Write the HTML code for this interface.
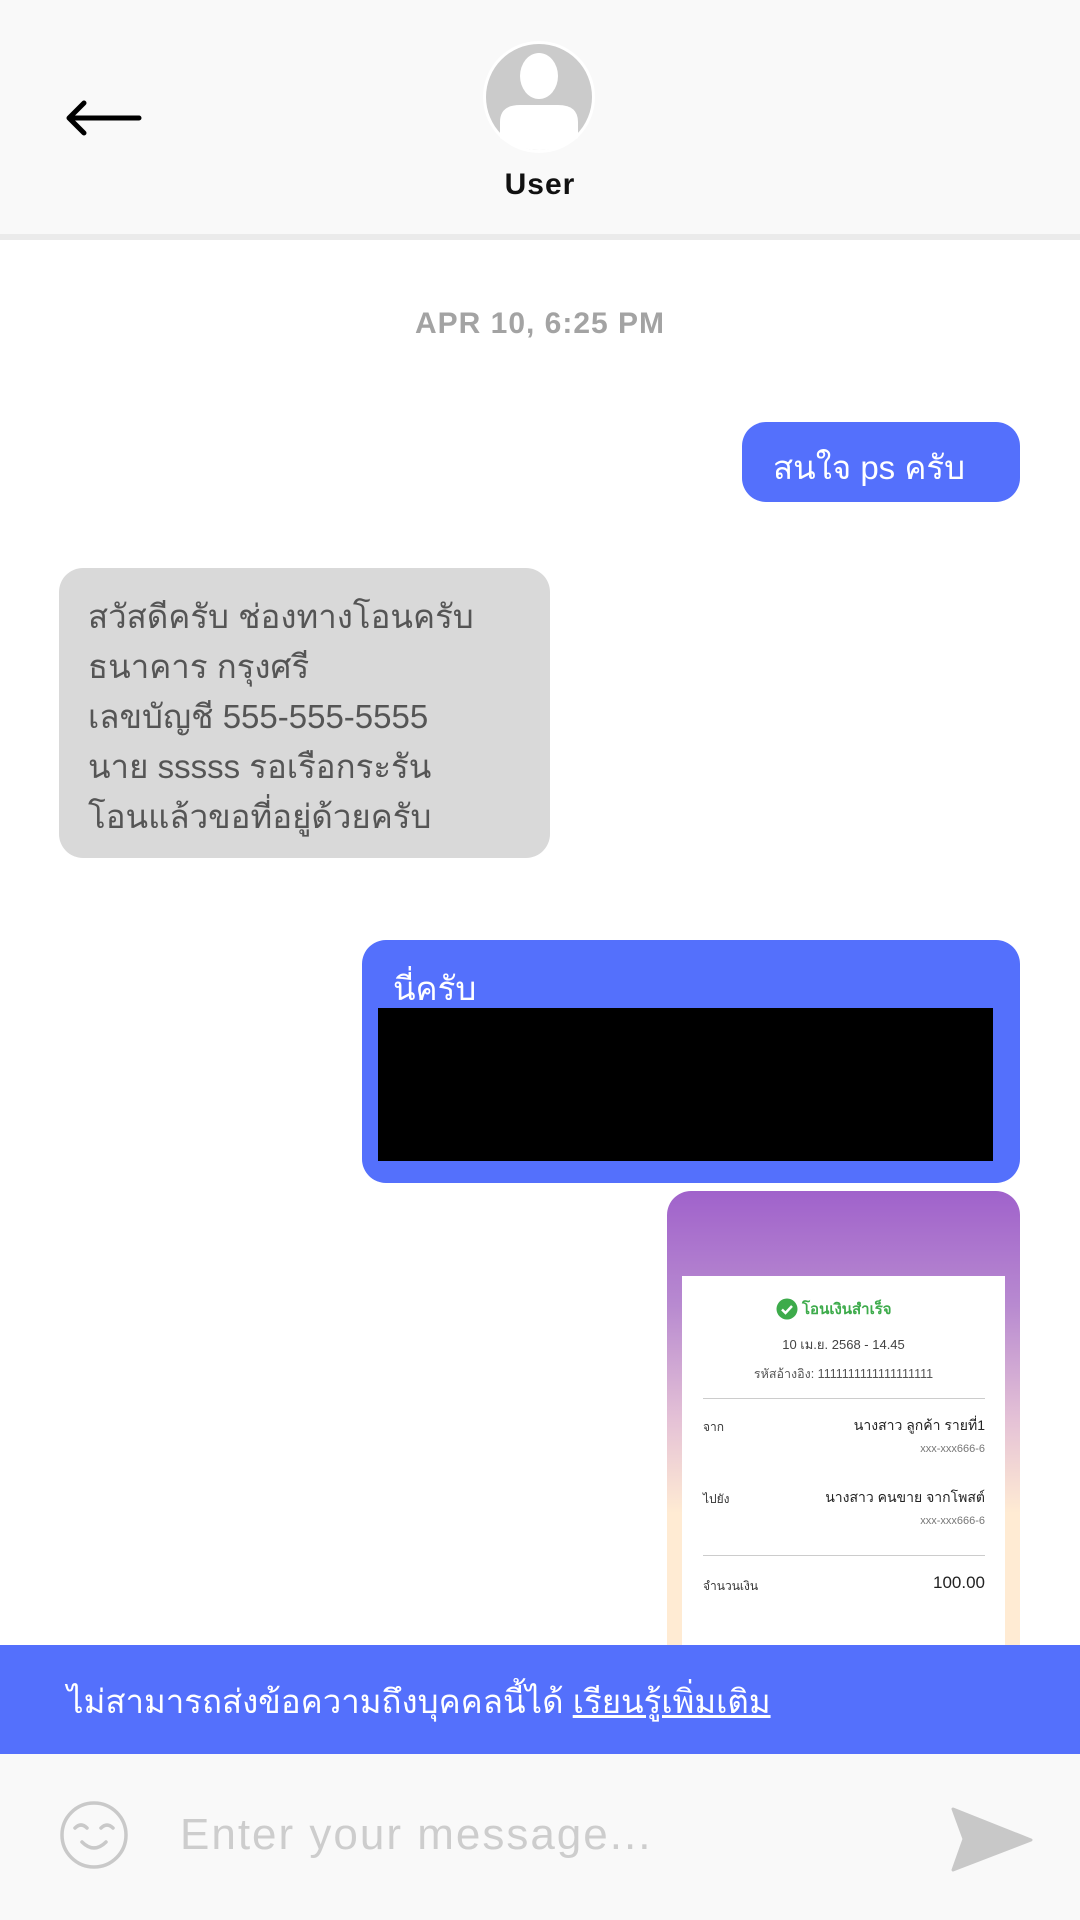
<!DOCTYPE html>
<html><head><meta charset="utf-8"><style>
*{margin:0;padding:0;box-sizing:border-box}
body{width:1080px;height:1920px;position:relative;background:#fff;font-family:"Liberation Sans","Noto Sans CJK SC",sans-serif;overflow:hidden}
.a{position:absolute}
.th{font-family:"Liberation Sans","Noto Sans CJK SC",sans-serif}
</style></head><body>
<div class="a" style="left:0;top:0;width:1080px;height:240px;background:#f9f9f9;border-bottom:6px solid #ebebeb"></div>
<svg class="a" style="left:0;top:0" width="200" height="200"><path d="M139 118H70M84 103L69 118L84 133" stroke="#000" stroke-width="5" fill="none" stroke-linecap="round" stroke-linejoin="round"/></svg>
<svg class="a" style="top:38px;left:480px" width="118" height="118"><circle cx="59" cy="59" r="56" fill="#fff"/><circle cx="59" cy="59" r="53" fill="#cbcbcb"/><ellipse cx="59" cy="38" rx="19" ry="23" fill="#fff"/><path d="M20 100V84Q20 67 40 67H78Q98 67 98 84V100Q80 112 59 112Q38 112 20 100Z" fill="#fff"/></svg>
<div class="a" style="left:0;width:1080px;top:168px;text-align:center;font-size:30px;font-weight:bold;color:#111;letter-spacing:1px">User</div>
<div class="a" style="left:0;width:1080px;top:307px;text-align:center;font-size:30px;font-weight:bold;color:#a3a3a3;letter-spacing:1px">APR 10, 6:25 PM</div>

<div class="a th" style="left:742px;top:422px;width:278px;height:80px;background:#5470fc;border-radius:24px;color:#fff;font-size:33px;padding:19px 0 0 31px">สนใจ ps ครับ</div>

<div class="a th" style="left:59px;top:568px;width:491px;height:290px;background:#d9d9d9;border-radius:24px;color:#555;font-size:33px;line-height:50px;padding:24px 0 0 29px">สวัสดีครับ ช่องทางโอนครับ<br>ธนาคาร กรุงศรี<br>เลขบัญชี 555-555-5555<br>นาย sssss รอเรือกระรัน<br>โอนแล้วขอที่อยู่ด้วยครับ</div>

<div class="a" style="left:362px;top:940px;width:658px;height:243px;background:#5470fc;border-radius:24px"></div>
<div class="a th" style="left:393px;top:962px;color:#fff;font-size:33px">นี่ครับ</div>
<div class="a" style="left:378px;top:1008px;width:615px;height:153px;background:#000"></div>

<div class="a" style="left:667px;top:1191px;width:353px;height:460px;border-radius:24px 24px 0 0;background:linear-gradient(#a062cb 0%,#b88ad0 25%,#e5c2d6 50%,#ffebd3 70%,#ffebd3 100%)"></div>
<div class="a th" style="left:682px;top:1276px;width:323px;height:380px;background:#fff;color:#333">
 <svg class="a" style="left:94px;top:22px" width="22" height="22"><circle cx="11" cy="11" r="10.5" fill="#3dab4b"/><path d="M6 11.5l3.5 3.5 6.5-7" stroke="#fff" stroke-width="2.5" fill="none"/></svg>
 <div class="a" style="left:120px;top:21px;font-size:15px;color:#3dab4b;font-weight:bold">โอนเงินสำเร็จ</div>
 <div class="a" style="left:0;width:323px;top:58px;text-align:center;font-size:13px;color:#444">10 เม.ย. 2568 - 14.45</div>
 <div class="a" style="left:0;width:323px;top:88px;text-align:center;font-size:12.5px;color:#555">รหัสอ้างอิง: 1111111111111111111</div>
 <div class="a" style="left:21px;top:122px;width:282px;height:1px;background:#ccc"></div>
 <div class="a" style="left:21px;top:142px;font-size:12px">จาก</div>
 <div class="a" style="right:20px;top:139px;font-size:14px;color:#222">นางสาว ลูกค้า รายที่1</div>
 <div class="a" style="right:20px;top:167px;font-size:11px;color:#777">xxx-xxx666-6</div>
 <div class="a" style="left:21px;top:214px;font-size:12px">ไปยัง</div>
 <div class="a" style="right:20px;top:211px;font-size:14px;color:#222">นางสาว คนขาย จากโพสต์</div>
 <div class="a" style="right:20px;top:239px;font-size:11px;color:#777">xxx-xxx666-6</div>
 <div class="a" style="left:21px;top:279px;width:282px;height:1px;background:#ccc"></div>
 <div class="a" style="left:21px;top:301px;font-size:12px">จำนวนเงิน</div>
 <div class="a" style="right:20px;top:297px;font-size:17px;color:#222">100.00</div>
</div>

<div class="a th" style="left:0;top:1645px;width:1080px;height:109px;background:#5470fc;color:#fff;font-size:33px;padding:30px 0 0 67px">ไม่สามารถส่งข้อความถึงบุคคลนี้ได้ <u>เรียนรู้เพิ่มเติม</u></div>
<div class="a" style="left:0;top:1754px;width:1080px;height:166px;background:#f9f9f9"></div>
<svg class="a" style="left:55px;top:1797px" width="80" height="80"><circle cx="39" cy="38" r="32" fill="none" stroke="#c9c9c9" stroke-width="3.5"/><path d="M20 31q6-6 12 0M46 31q6-6 12 0M27 45q12 12 24 0" stroke="#c9c9c9" stroke-width="3.5" fill="none" stroke-linecap="round"/></svg>
<div class="a" style="left:180px;top:1810px;font-size:44px;color:#cdcdcd;letter-spacing:2px">Enter your message...</div>
<svg class="a" style="left:940px;top:1795px" width="100" height="90"><path d="M13 14L91 45L13 75L24 44Z" fill="#c8c8c8" stroke="#c8c8c8" stroke-width="3" stroke-linejoin="round"/></svg>
</body></html>
